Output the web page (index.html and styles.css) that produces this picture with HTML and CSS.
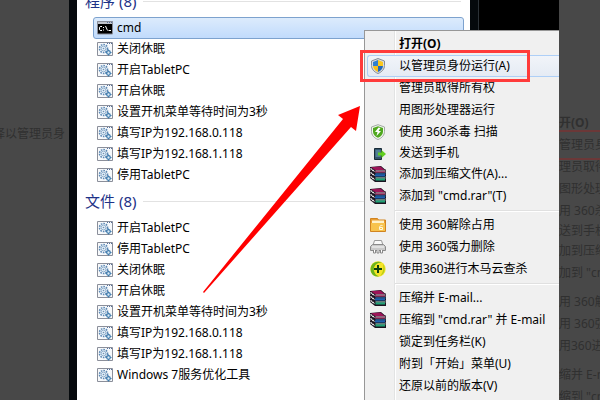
FILE: index.html
```html
<!DOCTYPE html>
<html lang="zh-CN">
<head>
<meta charset="utf-8">
<title>cmd</title>
<link rel="stylesheet" href="styles.css">
</head>
<body>
<svg width="0" height="0" class="defs" aria-hidden="true">
  <symbol id="batch" viewBox="0 0 16 14">
    <path d="M.5.5h15v13H.5z" fill="#f7f9fb" stroke="#8b8f9a"/>
    <path d="M10 1.5h5" stroke="#56709a" stroke-dasharray="1 1"/>
    <circle cx="6.500" cy="6.500" r="4" fill="none" stroke="#5b88b5" stroke-width="1.600" stroke-dasharray="1.600 1"/>
    <circle cx="6.500" cy="6.500" r="2.400" fill="#e4eef6" stroke="#8fb0cf"/>
    <circle cx="6.500" cy="6.500" r=".8" fill="#6f92b4"/>
    <circle cx="11.500" cy="10.500" r="1.800" fill="#d9e9f5" stroke="#3977aa" stroke-width="1.200"/>
    <path d="M11.500 7.500v1M11.500 12.500v1M8.500 10.500h1M13.500 10.500h1" stroke="#3977aa"/>
  </symbol>
  <symbol id="console" viewBox="0 0 16 14">
    <path d="M.5.5h15v12.500H.5z" fill="#000" stroke="#8b8f9a"/>
    <path d="M1 1h14v2H1z" fill="#bfc3cb"/>
    <path d="M10 1.500h5" stroke="#56709a" stroke-dasharray="1 1"/>
    <path d="M5 5.500H3.200L2.500 6.200v2.600l.7.700H5M6.500 6v1M6.500 8.500v1M8.500 5l2 4.500M11.500 9.500h2.500" fill="none" stroke="#fff"/>
  </symbol>
  <symbol id="shield" viewBox="0 0 16 16">
    <path d="M8 .5 14.500 3v4.500C14.500 11 12 14 8 15.500 4 14 1.500 11 1.500 7.500V3z" fill="#d8dde2" stroke="#858c94"/>
    <path d="M8 2v6H3V4z" fill="#2f7fd0"/><path d="M8 2v6h5V4z" fill="#fbc81e"/>
    <path d="M3 8h5v6Q3.500 12 3 8z" fill="#f8bf18"/><path d="M8 8h5q-.5 4-5 6z" fill="#2468b8"/>
  </symbol>
  <symbol id="antivirus" viewBox="0 0 16 16">
    <path d="M8 .7 14.500 3v4.500C14.500 11 12 14 8 15.500 4 14 1.500 11 1.500 7.500V3z" fill="#f3f6f0" stroke="#a0aaa0"/>
    <path d="M8 2.300 13 4v3.500c0 2.800-2 5-5 6.300-3-1.300-5-3.500-5-6.300V4z" fill="#4fa81e"/>
    <path d="M8.500 3.500 5 8h2.500L6.500 12 11 7H8.500L10.500 4z" fill="#fff"/>
  </symbol>
  <symbol id="phone" viewBox="0 0 16 16">
    <path d="M4.500 2.500h7v11h-7z" fill="#34546a" stroke="#172a36"/>
    <path d="M5.500 4h5v7h-5z" fill="#528096"/>
    <path d="M8 6.500h3.500V4L16 8l-4.500 4V9.500H8z" fill="#62ce20"/>
  </symbol>
  <symbol id="rar" viewBox="0 0 16 16">
    <path d="M0 1 11 0l4 3.500h1V6l-.5.500.5.500v3l-.5.500.5.500v5H5l-5-4V9l.5-.500L0 8V5l.5-.500L0 4z" fill="#1b1420"/>
    <path d="M1 1.200 10.500.5 14.500 4H5z" fill="#9c1458"/>
    <path d="M5.500 4.500h10v1h-10z" fill="#f3c3d6"/><path d="M5 5.500h10v1H5z" fill="#c0407a"/>
    <path d="M5.500 7.500h10v1h-10z" fill="#2d86d8"/><path d="M5 8.500h10v2H5z" fill="#1c5fae"/>
    <path d="M5.500 11.500h10v1h-10z" fill="#b8ecd6"/><path d="M5.500 12.500H15v2H5.500z" fill="#1fa276"/>
    <path d="m.500 2.500 4 3M.500 6.500l4 3M.500 10.500l4 3" stroke="#fff" stroke-width="1.300" stroke-dasharray="1.700 .6"/>
  </symbol>
  <symbol id="unlock" viewBox="0 0 16 16">
    <path d="M.5 1.500h7l1 1.500h7v11.500H.5z" fill="#e99c30" stroke="#d18420"/>
    <path d="M2 3.500h12v3H2z" fill="#fff2ca"/><path d="M1 6h14v8H1z" fill="#f8c34d"/>
    <path d="M12.500 8.500c-2-.5-3 .5-3 2.500v1.500h3v-2h-3" fill="none" stroke="#fff8dd"/>
  </symbol>
  <symbol id="shred" viewBox="0 0 16 16">
    <path d="M4.500 1.500h7l1.500 5H3z" fill="#f9f9f9" stroke="#999"/>
    <path d="M2.500 5.500h11l2 2v4H.5v-4z" fill="#c9c9c9" stroke="#8a8a8a"/>
    <path d="M2 8h12" stroke="#f8f8f8"/>
    <path d="M3.500 11v3h2v-3M7 11v3h2v-3M10.500 11v3h2v-3" fill="#fff" stroke="#888"/>
  </symbol>
  <symbol id="cloud" viewBox="0 0 16 16">
    <circle cx="8" cy="8" r="7.700" fill="#f5e428"/>
    <path d="M1 11C-1 4 5-1 12 1.500 7 1 3 5 4 10q1 4 5 5.500Q3 16 1 11z" fill="#6cb51d"/>
    <path d="M13 3c3 4 2 10-3 12 3-3 4-8 3-12z" fill="#b5cc17"/>
    <path d="M8 4v8M4 8h8" stroke="#093e10" stroke-width="2"/>
  </symbol>
</svg>

<div class="screen">
  <aside class="dim dim-left"><p>择以管理员身</p></aside>
  <main class="desktop">
    <section class="start">
      <div class="results">
        <h2>程序 (8)</h2>
        <ul>
          <li class="selected"><svg><use href="#console"/></svg>cmd</li>
          <li><svg><use href="#batch"/></svg>关闭休眠</li>
          <li><svg><use href="#batch"/></svg>开启TabletPC</li>
          <li><svg><use href="#batch"/></svg>开启休眠</li>
          <li><svg><use href="#batch"/></svg>设置开机菜单等待时间为3秒</li>
          <li><svg><use href="#batch"/></svg>填写IP为192.168.0.118</li>
          <li><svg><use href="#batch"/></svg>填写IP为192.168.1.118</li>
          <li><svg><use href="#batch"/></svg>停用TabletPC</li>
        </ul>
        <h2>文件 (8)</h2>
        <ul>
          <li><svg><use href="#batch"/></svg>开启TabletPC</li>
          <li><svg><use href="#batch"/></svg>停用TabletPC</li>
          <li><svg><use href="#batch"/></svg>关闭休眠</li>
          <li><svg><use href="#batch"/></svg>开启休眠</li>
          <li><svg><use href="#batch"/></svg>设置开机菜单等待时间为3秒</li>
          <li><svg><use href="#batch"/></svg>填写IP为192.168.0.118</li>
          <li><svg><use href="#batch"/></svg>填写IP为192.168.1.118</li>
          <li><svg><use href="#batch"/></svg>Windows 7服务优化工具</li>
        </ul>
      </div>
    </section>
    <div class="menu" role="menu">
      <button role="menuitem" class="default">打开(O)</button>
      <button role="menuitem" class="hover"><svg><use href="#shield"/></svg>以管理员身份运行(A)</button>
      <button role="menuitem">管理员取得所有权</button>
      <button role="menuitem">用图形处理器运行</button>
      <button role="menuitem"><svg><use href="#antivirus"/></svg>使用 360杀毒 扫描</button>
      <button role="menuitem" class="short"><svg><use href="#phone"/></svg>发送到手机</button>
      <button role="menuitem"><svg><use href="#rar"/></svg>添加到压缩文件(A)...</button>
      <button role="menuitem"><svg><use href="#rar"/></svg>添加到 "cmd.rar"(T)</button>
      <hr>
      <button role="menuitem"><svg><use href="#unlock"/></svg>使用 360解除占用</button>
      <button role="menuitem"><svg><use href="#shred"/></svg>使用 360强力删除</button>
      <button role="menuitem"><svg><use href="#cloud"/></svg>使用360进行木马云查杀</button>
      <hr>
      <button role="menuitem"><svg><use href="#rar"/></svg>压缩并 E-mail...</button>
      <button role="menuitem"><svg><use href="#rar"/></svg>压缩到 "cmd.rar" 并 E-mail</button>
      <button role="menuitem">锁定到任务栏(K)</button>
      <button role="menuitem">附到「开始」菜单(U)</button>
      <button role="menuitem">还原以前的版本(V)</button>
    </div>
    <svg class="arrow" viewBox="0 0 164 190" aria-hidden="true"><path d="M3 189 143 16l-5-4 22-9-4 25-5-4L4 190z" fill="#f00"/></svg>
    <div class="mark"></div>
  </main>
  <aside class="dim dim-right">
    <p class="default">开(O)</p><p class="marked">管理员身</p><p>理员取得</p><p>图形处理</p><p>用 360杀</p><p class="short">送到手机</p><p>加到压缩</p><p>加到 "cm</p>
    <p class="group">用 360解</p><p>用 360强</p><p>用360进</p>
    <p class="group">缩并 E-m</p><p>缩到 "cm</p>
  </aside>
</div>
</body>
</html>
```

FILE: styles.css
```css
* { box-sizing: border-box; }
body {
  margin: 0;
  background: #484848;
  font: 12px/20px "Noto Sans", "Noto Sans CJK SC", sans-serif;
  color: #000;
}
.defs { position: absolute; }
.screen {
  display: grid;
  grid-template-columns: 69px 1fr 41px;
  height: 100vh;
  overflow: hidden;
}
.dim {
  overflow: hidden;
  background: #484848;
  color: #303030;
  white-space: nowrap;
}
.dim p { margin: 0; height: 22px; line-height: 22px; }
.dim-left { padding-top: 123px; }
.dim-left p { margin-left: -7px; }
.dim-right { padding-top: 112px; }
.dim-right .default { font-weight: bold; }
.dim-right .marked {
  height: 30px;
  margin: -4px 0;
  line-height: 26px;
  border: solid #6b3838;
  border-width: 2px 0;
}
.dim-right .short { height: 18px; line-height: 18px; }
.dim-right .group { margin-top: 7px; }

.desktop {
  position: relative;
  overflow: hidden;
  background: #000;
}
.start {
  width: 409px;
  height: 100%;
  overflow: hidden;
  border: solid #05090c;
  border-width: 0 8px;
  background: #fff;
  box-shadow: 1px 0 #2b3136;
}
.results { margin-top: -15px; padding: 0 6px 0 8px; }
h2 {
  display: flex;
  align-items: center;
  gap: 7px;
  margin: 0;
  height: 32px;
  font-size: 15px;
  font-weight: normal;
  color: #1e3287;
}
h2::after {
  content: "";
  flex: 1;
  height: 1px;
  margin-right: 3px;
  background: #e2e2e2;
}
ul { margin: 0; padding: 0 0 0 8px; list-style: none; }
li {
  display: flex;
  align-items: center;
  gap: 4px;
  height: 21px;
  padding-left: 3px;
  border: 1px solid transparent;
  border-radius: 3px;
}
li svg { width: 16px; height: 14px; }
.selected {
  height: 22px;
  margin-bottom: -1px;
  border-color: #7da2ce;
  background: linear-gradient(#dcebfc, #c1dbfc);
}

.menu {
  position: absolute;
  top: 30px;
  left: 295px;
  right: 0;
  bottom: 0;
  overflow: hidden;
  padding: 2px 0 0 2px;
  border: solid #979797;
  border-width: 1px 0 0 1px;
  background: linear-gradient(90deg, transparent 29px, #e2e3e3 29px 30px, #fff 30px 31px, transparent 31px) #f0f0f0;
}
.menu button {
  position: relative;
  display: block;
  width: 100%;
  height: 22px;
  padding: 0 0 0 31px;
  border: 1px solid transparent;
  border-right: 0;
  border-radius: 3px 0 0 3px;
  background: none;
  font: inherit;
  text-align: left;
  white-space: nowrap;
  color: inherit;
}
.menu .default { font-weight: bold; }
.menu .hover {
  border-color: #aecff7;
  background: linear-gradient(#f1f4f9, #e5ebf4);
}
.menu .short { height: 20px; line-height: 18px; }
.menu svg {
  position: absolute;
  top: 2px;
  left: 2px;
  width: 16px;
  height: 16px;
}
.menu hr {
  height: 2px;
  margin: 3px 0 2px 28px;
  border: solid;
  border-width: 1px 0;
  border-color: #e0e0e0 transparent #fff;
}
.arrow {
  position: absolute;
  top: 103px;
  left: 131px;
  width: 164px;
  height: 190px;
}
.mark {
  position: absolute;
  top: 50px;
  left: 291px;
  width: 170px;
  height: 32px;
  border: 3px solid #ff3b3b;
}
```
